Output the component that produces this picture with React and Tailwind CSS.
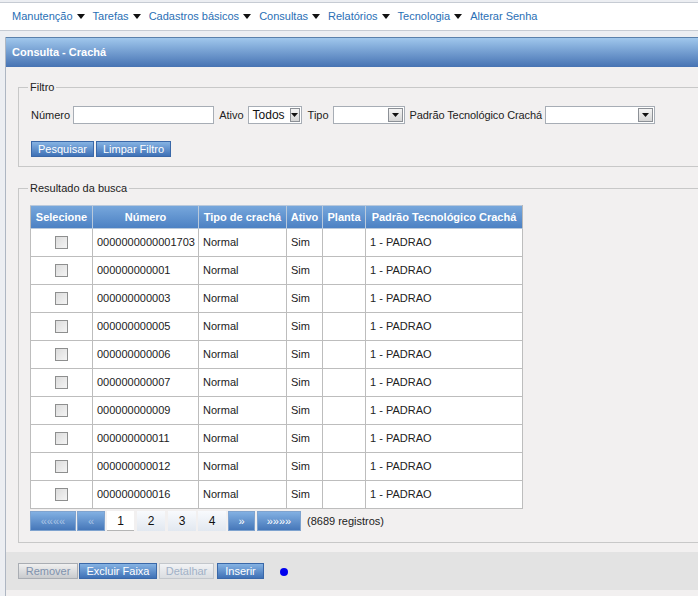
import React from 'react';

const menu = ['Manutenção', 'Tarefas', 'Cadastros básicos', 'Consultas', 'Relatórios', 'Tecnologia'];

const rows = [
  '0000000000001703',
  '000000000001',
  '000000000003',
  '000000000005',
  '000000000006',
  '000000000007',
  '000000000009',
  '000000000011',
  '000000000012',
  '000000000016',
];

const blueBtn =
  'h-[16px] flex items-center justify-center bg-linear-to-b from-[#86b3e3] to-[#3f71b6] border border-[#3a68a8] text-white text-[11px] leading-none';
const grayBtn =
  'h-[16px] flex items-center justify-center bg-linear-to-b from-[#f0f0f0] to-[#c9cbce] border border-[#a9adb3] text-[#7f92ad] text-[11px] leading-none';
const pagerBlue =
  'flex items-center justify-center bg-linear-to-b from-[#82b0e2] to-[#4677b9] border border-[#7fa3cf] text-[11px]';
const pagerNum =
  'w-[28px] flex items-center justify-center bg-linear-to-b from-[#f8fafd] to-[#e2e8f0] text-[#111]';

function Caret() {
  return (
    <svg width="8" height="5" viewBox="0 0 8 5" className="ml-[4px] mr-[8px]">
      <polygon points="0,0 8,0 4,5" fill="#111" />
    </svg>
  );
}

function Select({ width, value }) {
  return (
    <div className={`h-[18px] flex items-stretch bg-white border border-[#a7adb5] ${width}`}>
      <span className="flex-1 px-[4px] text-[12px] leading-[16px] text-[#111]">{value}</span>
      <span className="w-[15px] m-[1px] flex items-center justify-center bg-linear-to-b from-[#f4f4f4] to-[#d6d6d6] border border-[#8c9096]">
        <svg width="7" height="4" viewBox="0 0 7 4">
          <polygon points="0,0 7,0 3.5,4" fill="#111" />
        </svg>
      </span>
    </div>
  );
}

function Checkbox() {
  return <div className="w-[13px] h-[13px] mx-auto border border-[#8e8f8f] bg-linear-to-br from-[#dcdcdc] to-[#f4f4f4]" />;
}

export default function App() {
  return (
    <div className="w-[698px] h-[596px] overflow-hidden bg-[#eceef2] font-['Liberation_Sans',Arial,sans-serif] text-[11px] text-[#222]">
      {/* menu */}
      <div className="mt-[2px] h-[29px] bg-white border-y border-[#c6cbd3] flex items-center pl-[12px] text-[11px] text-[#2a6fb5]">
        {menu.map((m) => (
          <div key={m} className="flex items-center">
            <span>{m}</span>
            <Caret />
          </div>
        ))}
        <span>Alterar Senha</span>
      </div>

      {/* panel */}
      <div className="mt-[6px] ml-[5px] w-[720px] border-l border-[#aeb6c2] bg-[#f2f0f0]">
        <div className="h-[30px] border-t border-[#5a80ab] bg-linear-to-b from-[#a0c7ec] to-[#4773b3] flex items-center pl-[6px] text-white font-bold text-[11px]">
          Consulta - Crachá
        </div>

        <div className="pt-[13px] px-[12px]">
          <fieldset className="border border-[#c8c8c8] pl-[12px] pb-[9px]">
            <legend className="-ml-[3px] px-[2px] leading-[14px]">Filtro</legend>
            <div className="mt-[12px] flex items-center h-[18px]">
              <span>Número</span>
              <div className="ml-[3px] w-[141px] h-[18px] bg-white border border-[#a7adb5]" />
              <span className="ml-[5px]">Ativo</span>
              <div className="ml-[4px]">
                <Select width="w-[54px]" value="Todos" />
              </div>
              <span className="ml-[6px]">Tipo</span>
              <div className="ml-[4px]">
                <Select width="w-[72px]" value="" />
              </div>
              <span className="ml-[5px] tracking-[-0.1px]">Padrão Tecnológico Crachá</span>
              <div className="ml-[3px]">
                <Select width="w-[110px]" value="" />
              </div>
            </div>
            <div className="mt-[17px] flex gap-[2px]">
              <div className={`${blueBtn} w-[63px]`}>Pesquisar</div>
              <div className={`${blueBtn} w-[75px]`}>Limpar Filtro</div>
            </div>
          </fieldset>

          <fieldset className="mt-[14px] border border-[#c8c8c8] pl-[11px] pb-[11px]">
            <legend className="-ml-[2px] px-[2px] leading-[14px]">Resultado da busca</legend>
            <table className="mt-[10px] border-collapse text-[11px]">
              <thead>
                <tr className="h-[23px] bg-linear-to-b from-[#77a7dc] to-[#4a7fc2] text-white font-bold">
                  <th className="w-[62px] border border-[#b9c9dc] border-l-[#b9b9b9] font-bold">Selecione</th>
                  <th className="w-[106px] border border-[#b9c9dc] font-bold">Número</th>
                  <th className="w-[88px] border border-[#b9c9dc] font-bold">Tipo de crachá</th>
                  <th className="w-[36px] border border-[#b9c9dc] font-bold">Ativo</th>
                  <th className="w-[43px] border border-[#b9c9dc] font-bold">Planta</th>
                  <th className="w-[157px] border border-[#b9c9dc] border-r-[#b9b9b9] font-bold">Padrão Tecnológico Crachá</th>
                </tr>
              </thead>
              <tbody className="bg-white">
                {rows.map((n) => (
                  <tr key={n} className="h-[28px]">
                    <td className="border border-[#bdbdbd]">
                      <Checkbox />
                    </td>
                    <td className="border border-[#bdbdbd] pl-[4px]">{n}</td>
                    <td className="border border-[#bdbdbd] pl-[4px]">Normal</td>
                    <td className="border border-[#bdbdbd] pl-[4px]">Sim</td>
                    <td className="border border-[#bdbdbd]"></td>
                    <td className="border border-[#bdbdbd] pl-[4px]">1 - PADRAO</td>
                  </tr>
                ))}
              </tbody>
            </table>

            <div className="mt-[2px] h-[20px] flex items-stretch text-[12px]">
              <div className={`${pagerBlue} w-[46px] text-[#a9c3e4]`}>««««</div>
              <div className={`${pagerBlue} ml-[1px] w-[28px] text-[#a9c3e4]`}>«</div>
              <div className="ml-[2px] w-[27px] flex items-center justify-center bg-white border-b border-[#b5b5b5] text-[#111]">1</div>
              <div className={`${pagerNum} ml-[3px]`}>2</div>
              <div className={`${pagerNum} ml-[3px]`}>3</div>
              <div className={`${pagerNum} ml-[2px]`}>4</div>
              <div className={`${pagerBlue} ml-[2px] w-[27px] text-white`}>»</div>
              <div className={`${pagerBlue} ml-[2px] w-[44px] text-white`}>»»»»</div>
              <span className="ml-[6px] flex items-center text-[11px]">(8689 registros)</span>
            </div>
          </fieldset>
        </div>

        <div className="mt-[9px] h-[38px] bg-[#e3e3e3] pl-[12px] pt-[11px] flex items-start">
          <div className={`${grayBtn} w-[60px]`}>Remover</div>
          <div className={`${blueBtn} ml-[1px] w-[78px]`}>Excluir Faixa</div>
          <div className={`${grayBtn} ml-[2px] w-[55px] from-[#f2f3f5] to-[#dadde1] border-[#c3c7cc] text-[#a1b1c7]`}>Detalhar</div>
          <div className={`${blueBtn} ml-[3px] w-[47px]`}>Inserir</div>
          <div className="ml-[16px] mt-[5px] w-[8px] h-[8px] rounded-full bg-[#0000ee]" />
        </div>
        <div className="h-[20px]" />
      </div>
    </div>
  );
}
